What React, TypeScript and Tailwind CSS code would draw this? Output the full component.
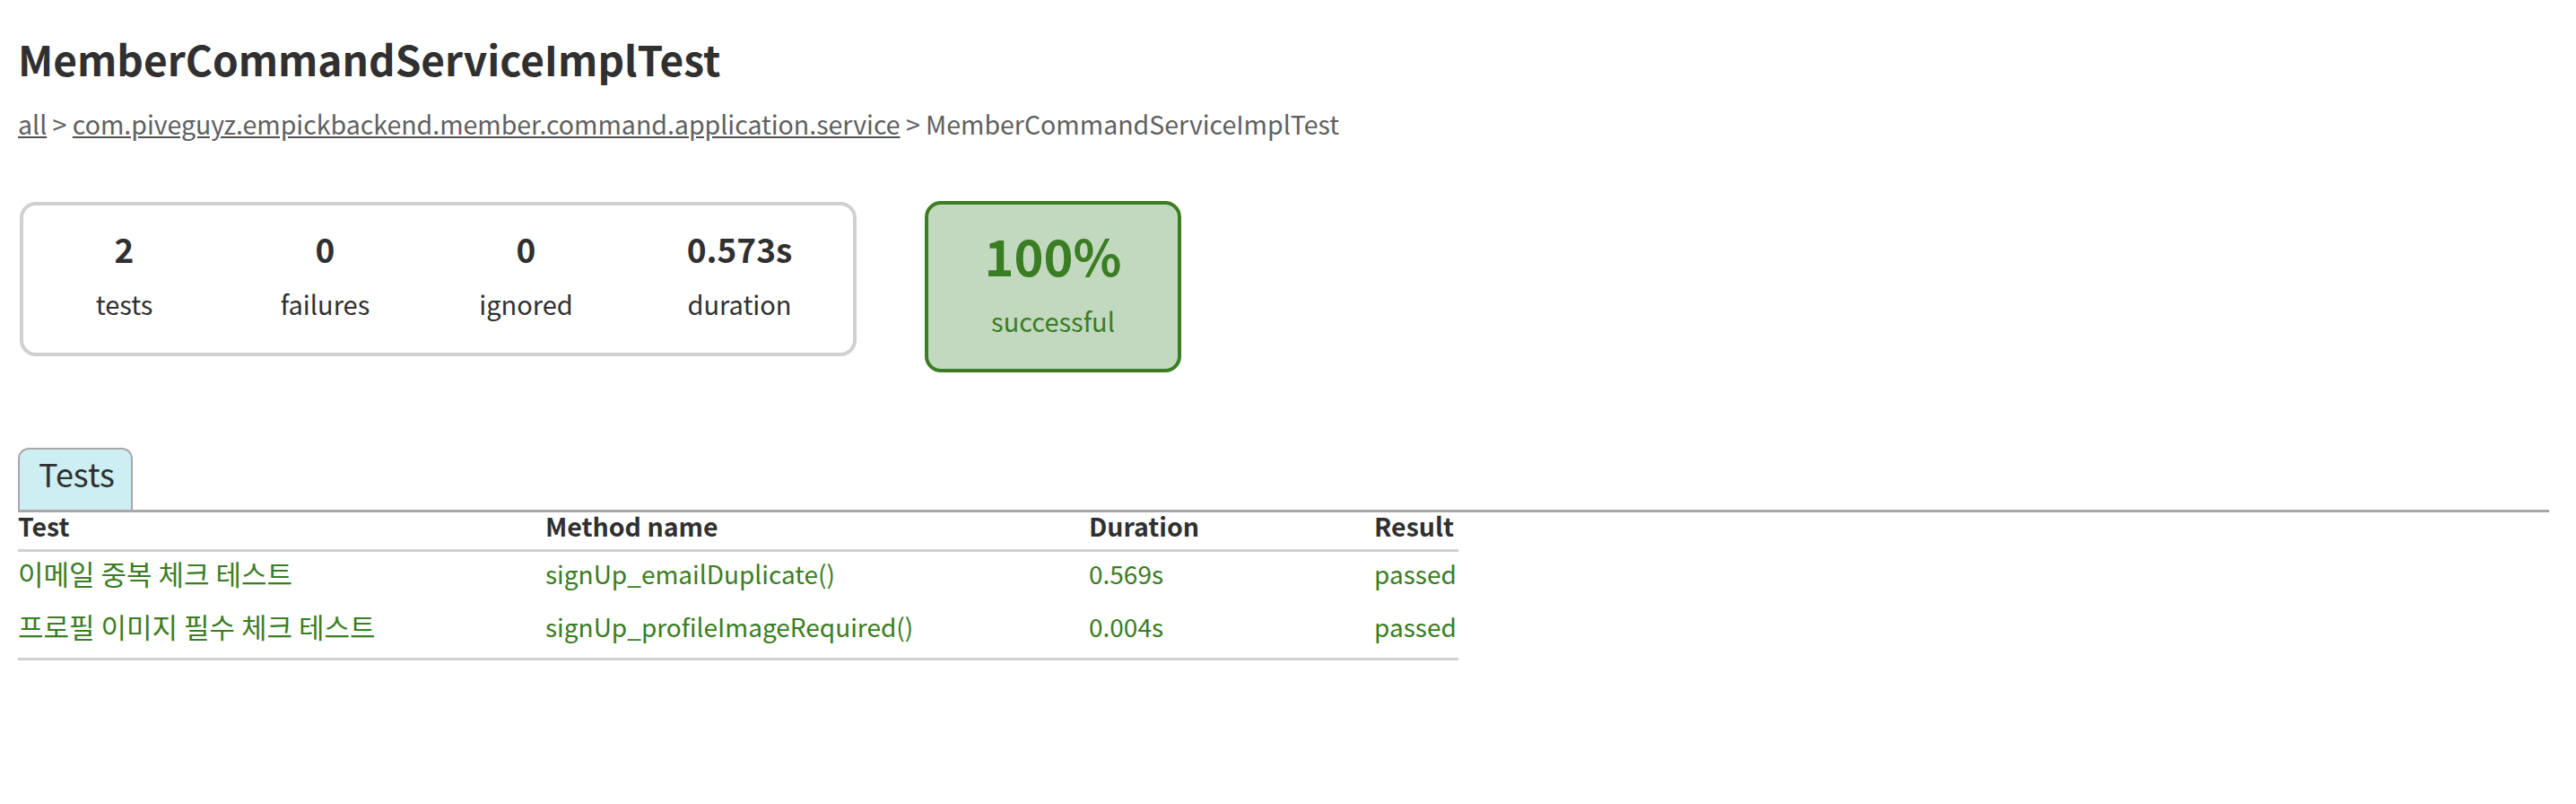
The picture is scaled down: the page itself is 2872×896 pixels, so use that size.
export default function App() {
  const tests = [
    { name: "이메일 중복 체크 테스트", method: "signUp_emailDuplicate()", duration: "0.569s", result: "passed" },
    { name: "프로필 이미지 필수 체크 테스트", method: "signUp_profileImageRequired()", duration: "0.004s", result: "passed" },
  ];

  return (
    <div className="min-h-screen bg-white pl-[20px] pr-[30px] pt-[43px] text-[#303030] font-['Noto_Sans_CJK_KR','Noto_Sans',sans-serif]">
      {/* Header */}
      <h1 className="text-[46px] leading-[45px] font-bold">MemberCommandServiceImplTest</h1>
      <div className="mt-[35px] text-[28.5px] leading-[29px] text-[#606060]">
        <a href="#" className="underline decoration-[#505050] text-[#606060]">all</a>
        {" > "}
        <a href="#" className="underline decoration-[#505050] text-[#606060]">com.piveguyz.empickbackend.member.command.application.service</a>
        {" > MemberCommandServiceImplTest"}
      </div>

      {/* Summary */}
      <div className="mt-[72px] flex items-start">
        <div className="ml-[2px] mt-[1px] flex h-[172px] w-[933px] gap-[23px] rounded-[18px] border-4 border-[#d0d0d0] px-[12px]">
          <Counter value="2" label="tests" width="w-[201px]" />
          <Counter value="0" label="failures" width="w-[201px]" />
          <Counter value="0" label="ignored" width="w-[201px]" />
          <Counter value="0.573s" label="duration" width="w-[229px]" />
        </div>
        <div className="ml-[76px] flex h-[191px] w-[286px] flex-col items-center rounded-[18px] border-4 border-[#3a7d22] bg-[#c2d9bf] pt-[28px] text-[#3a7d22]">
          <div className="text-[56px] leading-[56px] font-bold">100%</div>
          <div className="mt-[31px] text-[29px] leading-[29px]">successful</div>
        </div>
      </div>

      {/* Tabs */}
      <div className="mt-[84px]">
        <div className="flex border-b-[3px] border-[#a8a8a8]">
          <div className="h-[69px] w-[128px] rounded-t-[12px] border-2 border-b-0 border-[#a8a8a8] bg-[#cdeef3] pl-[21px] pt-[8px] text-[36px] leading-[36px]">
            Tests
          </div>
        </div>

        <div className="w-[1606px]">
          <div className="grid grid-cols-[588px_606px_318px_94px] border-b-[3px] border-[#d0d0d0] h-[44px] pt-[1px] text-[28.5px] leading-[28px] font-bold">
            <div>Test</div>
            <div>Method name</div>
            <div>Duration</div>
            <div>Result</div>
          </div>
          <div className="border-b-[3px] border-[#d0d0d0]">
            {tests.map((t) => (
              <div key={t.method} className="grid grid-cols-[588px_606px_318px_94px] h-[59px] pt-[10px] text-[28px] leading-[28px] text-[#3a7d22]">
                <div className="text-[31px]">{t.name}</div>
                <div>{t.method}</div>
                <div>{t.duration}</div>
                <div>{t.result}</div>
              </div>
            ))}
          </div>
        </div>
      </div>
    </div>
  );
}

function Counter({ value, label, width }: { value: string; label: string; width: string }) {
  return (
    <div className={`${width} flex flex-col items-center pt-[30px]`}>
      <div className="text-[37px] leading-[37px] font-bold">{value}</div>
      <div className="mt-[28px] text-[29px] leading-[29px]">{label}</div>
    </div>
  );
}
